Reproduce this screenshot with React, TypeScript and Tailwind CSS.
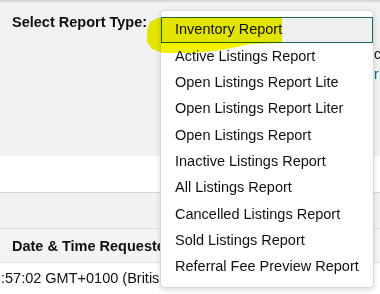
import React from 'react';

const reportTypes = [
  'Inventory Report',
  'Active Listings Report',
  'Open Listings Report Lite',
  'Open Listings Report Liter',
  'Open Listings Report',
  'Inactive Listings Report',
  'All Listings Report',
  'Cancelled Listings Report',
  'Sold Listings Report',
  'Referral Fee Preview Report',
];

// Freehand highlighter stroke drawn over the selected option
const Highlight = () => (
  <svg
    className="absolute left-0 top-0 pointer-events-none mix-blend-multiply"
    width="380"
    height="294"
    viewBox="0 0 380 294"
  >
    <path
      d="M147 30 L150 22 L158 18 L200 17 L282 17 L282 43 L250 44 L232 48 L215 51 L190 53 L163 53 L152 49 L147 42 Z"
      fill="#f2f200"
    />
  </svg>
);

const ReportMenu = () => (
  <div className="absolute left-[160px] top-[10px] w-[214px] h-[278px] bg-white border border-[#d5d9d9] rounded-[4px] shadow-[0_2px_5px_rgba(15,17,17,0.15)] py-[6px]">
    {reportTypes.map((name, i) => (
      <div
        key={name}
        className={
          i === 0
            ? 'h-[26.33px] flex items-center pl-[13px] border border-[#1d6568] bg-[#eef0f0] text-[#0f1111] text-[14.5px] whitespace-nowrap'
            : 'h-[26.33px] flex items-center pl-[13px] border border-transparent text-[#0f1111] text-[14.5px] whitespace-nowrap'
        }
      >
        {name}
      </div>
    ))}
  </div>
);

export default function App() {
  return (
    <div className="relative w-[380px] h-[294px] overflow-hidden bg-white font-['Liberation_Sans',Arial,sans-serif] text-[#0f1111]">
      <div className="h-[2px] bg-[#d5d9d9]" />

      {/* Report type selector */}
      <div className="h-[154px] bg-[#f0f2f2] flex pt-[10px]">
        <div className="pl-3 text-[14.5px] font-bold leading-[20px] whitespace-nowrap">Select Report Type:</div>
        <div className="ml-auto w-[6px] overflow-hidden pt-[32px] text-[14px] leading-[20px] whitespace-nowrap">
          <div>c</div>
          <div className="text-[#007185]">r</div>
        </div>
      </div>

      <div className="h-[36px] bg-white" />
      <div className="h-[36px] bg-[#f0f2f2] border-t border-[#d5d9d9]" />

      {/* Table */}
      <div className="h-[35px] bg-[#f3f4f4] border-t border-b border-[#dfe2e2] flex items-center pl-3 pt-[2px] text-[14.5px] font-bold whitespace-nowrap">
        Date &amp; Time Requested
      </div>
      <div className="h-[31px] bg-white flex items-center pl-px text-[14.5px] whitespace-nowrap">
        :57:02 GMT+0100 (British Summer Time)
      </div>

      <ReportMenu />
      <Highlight />
    </div>
  );
}
